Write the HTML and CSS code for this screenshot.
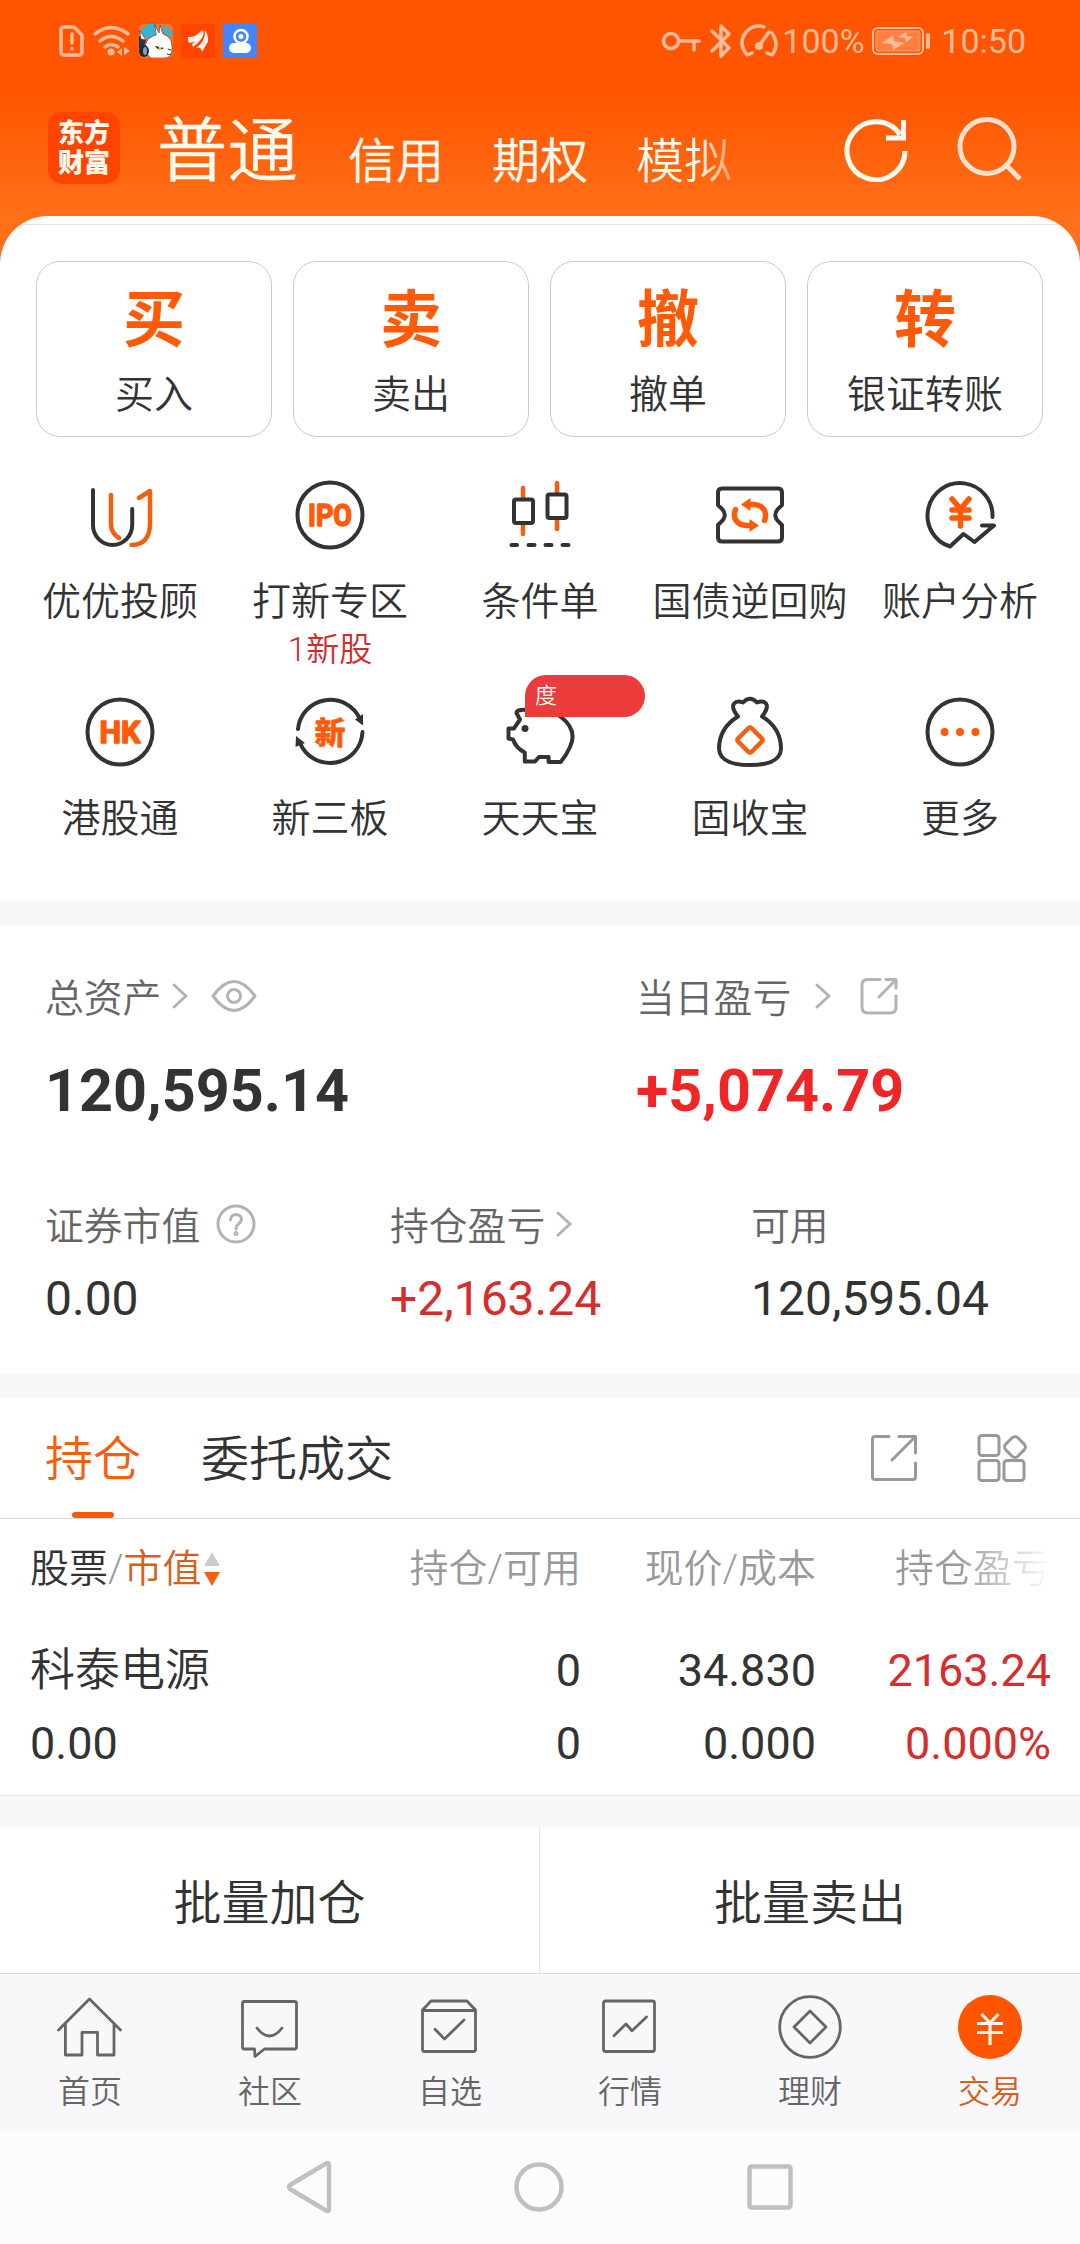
FILE: index.html
```html
<!DOCTYPE html>
<html lang="zh-CN">
<head>
  <meta charset="UTF-8">
  <title>交易</title>
  <link rel="stylesheet" href="styles.css">
</head>
<body>

  <header class="top">
    <div class="status">
      <div class="status-left">
        <svg class="ico-sim" width="26" height="34" viewBox="0 0 26 34"><path d="M5 3H15L23 11V28Q23 31 20 31H5Q2 31 2 28V6Q2 3 5 3Z"/><path d="M13 10V19M13 24.500V25"/></svg>
        <svg class="ico-wifi" width="38" height="34" viewBox="0 0 38 34"><path d="M2 10Q18 -3 35 10M7 17Q18 8 30 17M12 23Q18 18 25 23"/><circle cx="18" cy="28" r="3.500"/><path class="fill" d="M24 28l5-4v8zM31 23l6 4-6 4z"/></svg>
        <svg width="34" height="34" viewBox="0 0 34 34">
          <rect width="34" height="34" rx="5" fill="#f4743b"/>
          <path d="M0 8L9 0H17V14H4zM23 0L34 8V12L25 10z" fill="#35b6cf"/>
          <path d="M0 12l7 4-3 10-4-2z" fill="#26354a"/>
          <path d="M16 1l4 8 1-8 3 9q9 3 9 12v5q-1 7-7 7H12q-7-5-6-12 2-9 11-11zM1 7l6 9-5-1z" fill="#fff" stroke="#333" stroke-width=".6"/>
          <ellipse cx="5" cy="27" rx="5" ry="6" fill="#1d2b3a"/><ellipse cx="6" cy="27" rx="2" ry="4" fill="#7ca5bb"/>
          <path d="M16 22l9 2q-5 4-9-2z" fill="#222"/><circle cx="21" cy="24" r="1.500" fill="#e8dd3a"/>
          <path class="thin" d="M29 25l3 1M28 30q2 2 4 0" stroke="#333" fill="none"/>
        </svg>
        <svg width="34" height="34" viewBox="0 0 34 34"><path d="M0 0h34v34H0z" fill="#ff4400"/><path d="M7 13Q14 14 21 6 20 18 8 19 6 16 7 13zM22 6Q25 13 12 23L11 20Q20 14 22 6zM24 6Q30 15 25 21L21 28Q20 22 15 24 25 17 24 6z" fill="#fff4e8"/></svg>
        <svg width="34" height="34" viewBox="0 0 34 34"><path d="M0 0h34v34H0z" fill="#4285ff"/><circle cx="18" cy="12.500" r="6.500" fill="none" stroke="#fff" stroke-width="2.500"/><circle cx="18" cy="12.500" r="2.500" fill="#fff"/><rect x="6" y="19" width="22" height="10" rx="5" fill="#fff"/></svg>
      </div>
      <div class="status-right">
        <svg class="ico-key" width="40" height="34" viewBox="0 0 40 34"><circle cx="10" cy="17" r="7.500"/><path d="M18 17H38M33 17V26"/></svg>
        <svg class="ico-bt" width="22" height="34" viewBox="0 0 22 34"><path d="M2 7L19 24 11 32V2L19 10 2 27"/></svg>
        <svg class="ico-gauge" width="38" height="34" viewBox="0 0 38 34"><path d="M24 3Q15 0 7 7-3 18 7 31L12 29M32 9Q40 21 32 31L27 29M19 22L29 8"/><circle class="fill" cx="19" cy="22" r="4"/></svg>
        <span class="battery-text">100%</span>
        <svg class="ico-battery" width="60" height="30" viewBox="0 0 60 30"><rect x="1" y="2" width="50" height="26" rx="5"/><rect class="inner" x="4" y="5" width="44" height="20" rx="2"/><path class="bolt" d="M10 17L21 9 22 15 32 17 21 24 20 18zM26 11L34 6 35 10 41 11 34 16 33 12z"/><rect class="bolt" x="54" y="7" width="4" height="16" rx="2"/></svg>
        <span>10:50</span>
      </div>
    </div>
    <nav class="accounts">
      <div class="logo"><span>东方</span><span>财富</span></div>
      <span class="account account-active">普通</span>
      <span class="account">信用</span>
      <span class="account">期权</span>
      <span class="account account-fade">模拟</span>
      <svg class="ico-refresh" width="66" height="66" viewBox="0 0 66 66"><path d="M61 35A29 29 0 1 1 56 18.500M59.500 4V22H42"/></svg>
      <svg class="ico-search" width="66" height="66" viewBox="0 0 66 66"><circle cx="30" cy="30.500" r="27"/><path d="M49 49L63 63"/></svg>
    </nav>
  </header>

  <main>
    <section class="panel">
      <div class="actions">
        <div class="action"><b>买</b><span>买入</span></div>
        <div class="action"><b>卖</b><span>卖出</span></div>
        <div class="action"><b>撤</b><span>撤单</span></div>
        <div class="action"><b>转</b><span>银证转账</span></div>
      </div>

      <div class="menu">
        <div class="menu-item">
          <svg class="icon" viewBox="0 0 72 72"><path d="M9 11V46A19.600 20 0 0 0 48.200 46V30"/><path class="o" d="M27 16V45Q27 54 35 59M55 19L66 12V46Q65 66 47.500 66"/></svg>
          <span>优优投顾</span>
        </div>
        <div class="menu-item">
          <svg class="icon" viewBox="0 0 72 72"><circle cx="36" cy="36" r="32.500"/><text x="36" y="47" textLength="44" lengthAdjust="spacingAndGlyphs">IPO</text></svg>
          <span>打新专区</span>
          <small>1新股</small>
        </div>
        <div class="menu-item">
          <svg class="icon" viewBox="0 0 72 72"><path class="o" d="M19 9V19M19 45V55M53 4V14M53 40V50"/><rect x="10" y="20.500" width="19" height="23.500" rx="2"/><rect x="43.500" y="15.500" width="19" height="23.500" rx="2"/><path d="M7.500 66H13M24.500 66H30.500M41.500 66H47.500M58.500 66H64.500"/></svg>
          <span>条件单</span>
        </div>
        <div class="menu-item">
          <svg class="icon" viewBox="0 0 72 72"><path d="M8 9.500H64Q68 9.500 68 13.500V26L66 28Q56.500 36 66 44L68 46V58.500Q68 62.500 64 62.500H8Q4 62.500 4 58.500V46L6 44Q15.500 36 6 28L4 26V13.500Q4 9.500 8 9.500Z"/><path class="o thick" d="M36 25.500H39C49 25.500 54 33 50.500 41.500M36 46.500H33C23 46.500 18 39 21.500 30.500"/><path class="of" d="M27 25.500L36.500 19V32zM45 46.500L35.500 53V40z"/></svg>
          <span>国债逆回购</span>
        </div>
        <div class="menu-item">
          <svg class="icon" viewBox="0 0 72 72"><path d="M68.500 38A32.500 32.500 0 1 0 26 67.500L39.500 55 50.500 63 70 46.500H58"/><path class="o thick" d="M28 20L36.500 30 45 20M28 31H45M28 39H45M36.500 31V47"/></svg>
          <span>账户分析</span>
        </div>
        <div class="menu-item">
          <svg class="icon" viewBox="0 0 72 72"><circle cx="36" cy="36" r="32.500"/><text x="36" y="47" textLength="41" lengthAdjust="spacingAndGlyphs">HK</text></svg>
          <span>港股通</span>
        </div>
        <div class="menu-item">
          <svg class="icon" viewBox="0 0 72 72"><path d="M4 33A32.500 32.500 0 0 1 66 23M68.500 36A32.500 32.500 0 0 1 6 47"/><path class="df" d="M69 29.500L61 23.500 69 18zM2 40L1.500 51 11 47z"/><text class="cn" x="36" y="47.500">新</text></svg>
          <span>新三板</span>
        </div>
        <div class="menu-item">
          <svg class="icon" viewBox="0 0 72 72"><path d="M24 14Q12.500 13 12.500 17L16 23.500 9.800 32.600H4.500V42.500L9 43.500Q12 52 20.800 56.500V65.500H31L35 61H44.600V66H56.700Q62 60 66 51 74 34 57 21 42 10 27 17"/><circle class="df" cx="21" cy="32.600" r="3.500"/></svg>
          <em class="badge">度</em>
          <span>天天宝</span>
        </div>
        <div class="menu-item">
          <svg class="icon" viewBox="0 0 72 72"><path d="M24 20.500Q17 12 20 7.500 23 4 29 6.500 36 -1 43 6.500 49 4 52 7.500 55 12 48 20.500 67 32 67 53 66 69 36 69 6 69 5 53 5 32 24 20.500Z"/><rect class="o" x="26.500" y="34.500" width="19" height="19" rx="2" transform="rotate(45 36 44)"/></svg>
          <span>固收宝</span>
        </div>
        <div class="menu-item">
          <svg class="icon" viewBox="0 0 72 72"><circle cx="36" cy="36" r="32.500"/><path class="of" d="M16.600 36a4 4 0 1 0 8 0a4 4 0 1 0-8 0M32 36a4 4 0 1 0 8 0a4 4 0 1 0-8 0M47.500 36a4 4 0 1 0 8 0a4 4 0 1 0-8 0"/></svg>
          <span>更多</span>
        </div>
      </div>
    </section>

    <section class="assets">
      <div class="assets-main">
        <div>
          <div class="label">总资产
            <svg class="chev" viewBox="0 0 17 26"><path d="M2 2L14 13 2 24"/></svg>
            <svg class="eye" viewBox="0 0 46 32"><path d="M2 16Q23 -13 44 16 23 45 2 16Z"/><circle cx="23" cy="16" r="6.500"/></svg>
          </div>
          <strong>120,595.14</strong>
        </div>
        <div>
          <div class="label">当日盈亏
            <svg class="chev chev-far" viewBox="0 0 17 26"><path d="M2 2L14 13 2 24"/></svg>
            <svg class="share" viewBox="0 0 38 38"><path d="M20 2.500H8Q2 2.500 2 8V30Q2 36 8 36H30Q36 36 36 30V19M26 2.500H36V11M36 2.500L19 20"/></svg>
          </div>
          <strong class="up">+5,074.79</strong>
        </div>
      </div>
      <div class="assets-sub">
        <div>
          <div class="label">证券市值
            <svg class="help" viewBox="0 0 40 40"><circle cx="20" cy="20" r="18"/><path d="M14.500 16Q15 10.500 20 10.500 25.500 11 25.500 15.500 25 18.500 22 20.500 20 22 20 25"/><circle class="dot" cx="20" cy="29.500" r="1"/></svg>
          </div>
          <p>0.00</p>
        </div>
        <div>
          <div class="label">持仓盈亏
            <svg class="chev" viewBox="0 0 17 26"><path d="M2 2L14 13 2 24"/></svg>
          </div>
          <p class="up2">+2,163.24</p>
        </div>
        <div>
          <div class="label">可用</div>
          <p>120,595.04</p>
        </div>
      </div>
    </section>

    <section class="holdings">
      <div class="tabs">
        <span class="tab tab-active">持仓</span>
        <span class="tab">委托成交</span>
        <svg class="tab-share" width="48" height="48" viewBox="0 0 48 48"><path d="M19 2.500H5Q2.500 2.500 2.500 5V43Q2.500 45.500 5 45.500H43Q45.500 45.500 45.500 43V29M29 2.500H45.500V19M45 3L22 26"/></svg>
        <svg width="52" height="52" viewBox="0 0 52 52"><rect x="3" y="3.500" width="20" height="20" rx="3"/><rect x="3" y="28.500" width="20" height="20" rx="3"/><rect x="28" y="28.500" width="20" height="20" rx="3"/><rect x="30.500" y="6.500" width="17" height="17" rx="4" transform="rotate(45 39 15)"/></svg>
      </div>
      <div class="grid grid-head">
        <div class="sort"><span class="dark">股票</span>/<span class="orange">市值</span><svg width="16" height="36" viewBox="0 0 16 36"><path d="M8 1L16 15H0z" fill="#ccc"/><path d="M0 21H16L8 35z" fill="#f95d12"/></svg></div>
        <div>持仓/可用</div>
        <div>现价/成本</div>
        <div class="head-fade">持仓盈亏</div>
      </div>
      <div class="grid row-first">
        <div>科泰电源</div><div>0</div><div>34.830</div><div class="up2">2163.24</div>
      </div>
      <div class="grid row-second">
        <div>0.00</div><div>0</div><div>0.000</div><div class="up2">0.000%</div>
      </div>
    </section>

    <section class="batch">
      <div>批量加仓</div>
      <div>批量卖出</div>
    </section>
  </main>

  <footer class="tabbar">
    <div>
      <svg viewBox="0 0 66 66"><path d="M1.500 36L32.500 5 63.500 36M8.400 30V61H25V38.300H40.500V61H57V30"/></svg>
      <span>首页</span>
    </div>
    <div>
      <svg viewBox="0 0 66 66"><path d="M7 7.500H57.500Q59.500 7.500 59.500 9.500V53Q59.500 55 57.500 55H27.500L18 62.500 17.500 55H7Q5.500 55 5.500 53V9.500Q5.500 7.500 7 7.500ZM20 34Q32.500 50 45 34"/></svg>
      <span>社区</span>
    </div>
    <div>
      <svg viewBox="0 0 66 66"><path d="M5.500 16L14 7H50L58.500 16V55.500Q58.500 57.500 56.500 57.500H8Q5.500 57.500 5.500 55.500ZM5.500 16.500H58.500M18 35.300L27.500 45 47 26"/></svg>
      <span>自选</span>
    </div>
    <div>
      <svg viewBox="0 0 66 66"><rect x="6.500" y="7" width="51" height="50.500" rx="2"/><path d="M17 41.700L29 30 35 36.700 49.500 23"/></svg>
      <span>行情</span>
    </div>
    <div>
      <svg viewBox="0 0 66 66"><circle cx="33" cy="33" r="30.300"/><path d="M33 17L49 33 33 49 17 33Z"/></svg>
      <span>理财</span>
    </div>
    <div class="current">
      <svg viewBox="0 0 66 66"><circle cx="33" cy="33" r="32"/><path d="M24.500 20L33 29 41.500 20M20 29.500H46M20 38.500H46M33 29V51"/></svg>
      <span>交易</span>
    </div>
  </footer>

  <div class="sysnav">
    <svg width="46" height="54" viewBox="0 0 46 54"><path d="M40 3.500Q43 2 43 5V49Q43 52 40 50.500L4 29Q2 27 4 25Z"/></svg>
    <svg width="52" height="52" viewBox="0 0 52 52"><circle cx="26" cy="26" r="22.500"/></svg>
    <svg width="48" height="48" viewBox="0 0 48 48"><rect x="3.500" y="3.500" width="41" height="41" rx="2"/></svg>
  </div>

</body>
</html>
```

FILE: styles.css
```css
* { box-sizing: border-box; }
body { margin: 0; width: 1080px; height: 2244px; overflow: hidden; background: #fff; color: #333; font-family: Roboto, "Noto Sans CJK SC", sans-serif; font-weight: 400; }
svg { display: block; flex: none; fill: none; stroke-linecap: round; stroke-linejoin: round; }
p { margin: 0; }

/* header */
.top { height: 270px; background: linear-gradient(#ff5500 90px, #ff7019 220px); }
.status { height: 82px; padding: 0 54px 0 59px; display: flex; justify-content: space-between; align-items: center; color: #ffbb99; font-size: 34px; }
.status-left, .status-right { display: flex; align-items: center; }
.status-left { gap: 8px; }
.status-left svg { stroke-width: 3.500; }
.status-left .thin { stroke-width: 1; }
.ico-sim, .ico-wifi, .ico-key, .ico-bt, .ico-gauge, .ico-battery { stroke: #ffbb99; stroke-width: 3.500; }
.ico-wifi circle, .fill, .bolt { fill: #ffbb99; stroke: none; }
.ico-bt { margin: 0 8px 0 9px; }
.ico-gauge { margin-right: 4px; }
.ico-battery { stroke-width: 2; margin: 0 9px 0 9px; }
.inner { fill: #ff8040; stroke: #ffa070; stroke-width: 1; }
.battery-text { width: 81px; }
.accounts { height: 134px; padding: 0 57px 0 48px; display: flex; align-items: center; color: #fffaf0; font-weight: 350; -webkit-text-stroke: 0.3px; }
.logo { width: 72px; height: 72px; margin: -2px 37px 0 0; border-radius: 14px; background: #ff4400; display: flex; flex-direction: column; align-items: center; justify-content: center; font-size: 26px; line-height: 30px; font-weight: 900; -webkit-text-stroke: 0; }
.account { font-size: 48px; line-height: 60px; margin: 26px 48px 0 0; }
.account-active { font-size: 70.500px; line-height: 80px; margin: 5px 50px 0 0; }
.account-fade { margin-right: 0; background: linear-gradient(90deg, #fffaf0 65%, #ff9a60); background-clip: text; color: transparent; -webkit-text-stroke: 0; }
.ico-refresh { margin: 0 0 0 auto; stroke: #fffaf0; stroke-width: 5; stroke-linecap: butt; stroke-linejoin: miter; }
.ico-search { margin-left: 47px; stroke: #ffe0cc; stroke-width: 5; stroke-linecap: butt; }

/* trade panel */
main { margin-top: -54px; }
.panel { height: 685px; padding-top: 45px; border-radius: 48px 48px 0 0; background: linear-gradient(#fff 8px, #e3e3e3 8px, #e3e3e3 9px, #fff 9px); }
.actions { display: grid; grid-template-columns: repeat(4, 236px); gap: 21px; padding: 0 36px; }
.action { height: 176px; border: 1px solid #ccc; border-radius: 24px; display: flex; flex-direction: column; align-items: center; padding-top: 22px; }
.action b { font-size: 62px; line-height: 74px; font-weight: 700; color: #ff5a08; }
.action span { font-size: 39px; line-height: 44px; margin-top: 15px; font-weight: 350; }
.menu { display: grid; grid-template-columns: repeat(5, 210px); grid-auto-rows: 217px; padding: 42px 15px 0; }
.menu-item { position: relative; display: flex; flex-direction: column; align-items: center; white-space: nowrap; }
.menu-item span { font-size: 39px; line-height: 44px; margin-top: 29px; font-weight: 350; }
.menu-item small { font-size: 33px; line-height: 40px; margin-top: 6px; font-weight: 350; color: #d02c2c; }
.icon { width: 72px; height: 72px; stroke: #333; stroke-width: 4; }
.icon text { fill: #ff5a08; stroke: #ff5a08; stroke-width: 1.500; font-size: 31px; font-weight: 700; text-anchor: middle; }
.icon .cn { font-size: 31px; stroke-width: 0.500; font-weight: 900; }
.icon .o { stroke: #f4600f; stroke-width: 4.500; }
.icon .thick { stroke: #ff5a08; stroke-width: 5.500; }
.icon .of { fill: #ff5a08; stroke: none; }
.icon .df { fill: #333; stroke: none; }
.badge { position: absolute; left: 90px; top: -21px; width: 120px; height: 42px; padding-left: 10px; border-radius: 21px 21px 21px 0; background: #eb3b3b; color: #fff; font-size: 22px; line-height: 42px; font-style: normal; font-weight: 350; }

/* assets */
.assets { height: 473px; border-top: 24px solid #f7f8fa; padding: 46px 45px 0; }
.assets-main { display: grid; grid-template-columns: 591px 1fr; height: 228px; }
.assets-sub { display: grid; grid-template-columns: 345px 361px 1fr; }
.label { display: flex; align-items: center; height: 48px; font-size: 38.800px; font-weight: 350; color: #666; }
.label svg { stroke: #b3b3b3; stroke-width: 3; margin-top: 2px; }
.chev { width: 17px; height: 26px; margin-left: 11px; }
.chev-far { margin-left: 24px; }
.eye { width: 46px; height: 32px; margin-left: 22px; }
.share { width: 38px; height: 38px; margin-left: 28px; }
.help { width: 40px; height: 40px; margin-left: 16px; }
.assets strong { display: block; margin-top: 37px; font-size: 59.300px; line-height: 70px; font-weight: 700; }
.assets .up { color: #f02525; }
.up2 { color: #d62d2d; }
.assets p { font-size: 48px; line-height: 56px; margin-top: 24px; }

/* holdings */
.holdings { height: 422px; border-top: 24px solid #f7f8fa; border-bottom: 1px solid #e6e6e6; }
.tabs { display: flex; align-items: center; height: 121px; padding: 0 52px 0 45px; border-bottom: 1px solid #ddd; }
.tab { font-size: 48px; line-height: 116px; padding-top: 4px; margin-right: 60px; font-weight: 350; }
.tab-active { position: relative; color: #f4600f; }
.tab-active::after { content: ""; position: absolute; left: 27px; bottom: 0; width: 42px; height: 6px; border-radius: 3px; background: #f95a0a; }
.tabs svg { stroke: #999; stroke-width: 3; }
.tab-share { margin: 0 58px 0 auto; }
.grid { display: grid; grid-template-columns: 351px 200px 235px 235px; padding-left: 30px; font-size: 45px; line-height: 72px; text-align: right; }
.grid div:first-child { text-align: left; font-weight: 350; }
.grid-head { font-size: 39px; line-height: 100px; height: 98px; font-weight: 350; color: #999; }
.sort { display: flex; align-items: center; }
.dark { color: #333; }
.orange { color: #d9601c; }
.sort svg { margin-left: 2px; }
.head-fade { background: linear-gradient(90deg, #999 60%, #fff); background-clip: text; color: transparent; }
.row-first { padding-top: 18px; }
.row-second { padding-top: 1px; }
.row-second div:first-child { font-weight: 400; }

/* batch buttons */
.batch { display: grid; grid-template-columns: 539px 1fr; height: 177px; border-top: 31px solid #f7f8fa; text-align: center; font-size: 48px; line-height: 153px; font-weight: 350; }
.batch div { height: 146px; }
.batch div + div { border-left: 1px solid #e6e6e6; }

.tabbar { display: grid; grid-template-columns: repeat(6, 1fr); height: 157px; border-top: 1px solid #ddd; background: #f8f8fb; }
.tabbar div { display: flex; flex-direction: column; align-items: center; padding-top: 20px; font-size: 32px; line-height: 40px; font-weight: 350; color: #666; }
.tabbar svg { width: 66px; height: 66px; margin-bottom: 12px; stroke: #666; stroke-width: 2.800; }
.tabbar .current { color: #d9601c; }
.current circle { fill: #ff5500; stroke: none; }
.current path { stroke: #fff4e8; stroke-width: 3.200; stroke-linecap: butt; }

.sysnav { display: flex; align-items: center; justify-content: center; gap: 181px; height: 114px; background: #fcfcfc; }
.sysnav svg { stroke: #c0c0c0; stroke-width: 4.500; }
```
